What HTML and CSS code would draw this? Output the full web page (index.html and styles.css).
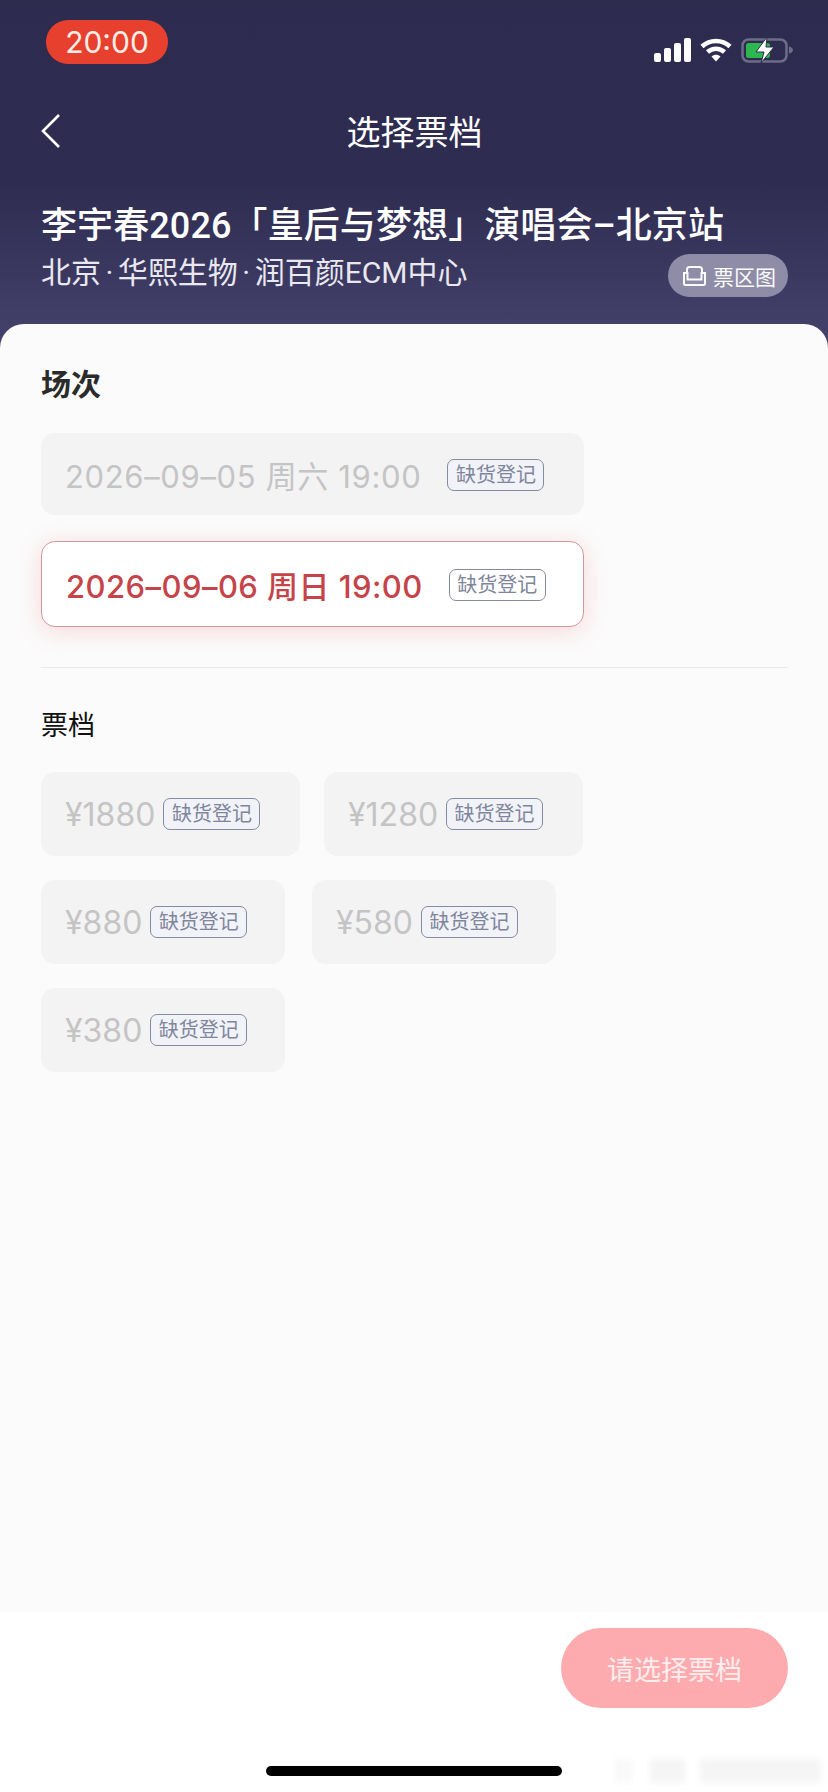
FILE: index.html
```html
<!DOCTYPE html>
<html>
  <head>
    <title>选择票档</title>
    <link rel="stylesheet" href="styles.css">
  </head>
  <body>
    <div class="page">
      <header class="top">
        <div class="status">
          <div class="time">20:00</div>
          <div class="status-icons">
            <svg class="signal" width="37" height="24" viewBox="0 0 37 24">
              <rect x="0" y="15" width="7" height="9" rx="2"/>
              <rect x="10" y="10" width="7" height="14" rx="2"/>
              <rect x="20" y="5" width="7" height="19" rx="2"/>
              <rect x="30" y="0" width="7" height="24" rx="2"/>
            </svg>
            <svg class="wifi" width="32" height="24" viewBox="0 0 32 24">
              <path d="M2 8.500C10 1 22 1 30 8.500" />
              <path d="M7.500 14C12.500 9.500 19.500 9.500 24.500 14" />
              <path class="wifi-dot" d="M11.500 18.500C14 16.300 18 16.300 20.500 18.500L16 23.500Z" />
            </svg>
            <svg class="battery" width="53" height="28" viewBox="0 0 53 28">
              <rect class="battery-case" x="1.500" y="3.500" width="44" height="22" rx="6"/>
              <rect class="battery-fill" x="5" y="7" width="24" height="15" rx="2.500"/>
              <path class="battery-nub" d="M48 10.500c2.500.5 4 2 4 3.500s-1.500 3-4 3.500z"/>
              <path class="battery-bolt" d="M26 1 15 16h8l-3 11 13-16h-8z"/>
            </svg>
          </div>
        </div>
        <nav class="nav">
          <svg class="back" width="21" height="36" viewBox="0 0 21 36">
            <path d="M18 2 2 18l16 16"/>
          </svg>
          <div class="nav-title">选择票档</div>
        </nav>
        <h1 class="show-name">李宇春2026「皇后与梦想」演唱会–北京站</h1>
        <div class="venue-row">
          <div class="venue">北京<span class="dot">·</span>华熙生物<span class="dot">·</span>润百颜ECM中心</div>
          <div class="map-btn">
            <svg width="23" height="20" viewBox="0 0 23 20">
              <path d="M4 8V3.500C4 2 5 1 6.500 1h10C18 1 19 2 19 3.500V8"/>
              <path d="M1 7h3.500v6.500h14V7H22v10.500c0 .8-.7 1.500-1.500 1.500h-18C1.700 19 1 18.300 1 17.500z"/>
            </svg>
            <span>票区图</span>
          </div>
        </div>
      </header>

      <main class="sheet">
        <h2 class="section-title">场次</h2>
        <div class="session-list">
          <div class="option session">
            <span class="label">2026–09–05 周六 19:00</span>
            <span class="tag">缺货登记</span>
          </div>
          <div class="option session selected">
            <span class="label">2026–09–06 周日 19:00</span>
            <span class="tag">缺货登记</span>
          </div>
        </div>
        <div class="divider"></div>
        <h2 class="section-title light">票档</h2>
        <div class="price-list">
          <div class="option price wide">
            <span class="label">¥1880</span>
            <span class="tag">缺货登记</span>
          </div>
          <div class="option price wide">
            <span class="label">¥1280</span>
            <span class="tag">缺货登记</span>
          </div>
          <div class="option price">
            <span class="label">¥880</span>
            <span class="tag">缺货登记</span>
          </div>
          <div class="option price">
            <span class="label">¥580</span>
            <span class="tag">缺货登记</span>
          </div>
          <div class="option price">
            <span class="label">¥380</span>
            <span class="tag">缺货登记</span>
          </div>
        </div>
      </main>

      <footer class="bottom">
        <button class="confirm">请选择票档</button>
        <div class="home-row">
          <div class="home-bar"></div>
          <div class="smudge"></div>
        </div>
      </footer>
    </div>
  </body>
</html>
```

FILE: styles.css
```css
* {
  box-sizing: border-box;
}
body {
  margin: 0;
  font-family: Inter, "Noto Sans CJK SC", sans-serif;
  background: #fff;
}
.page {
  width: 828px;
  height: 1792px;
  display: flex;
  flex-direction: column;
  overflow: hidden;
}

/* header */
.top {
  height: 348px;
  margin-bottom: -24px;
  padding: 20px 40px 0 41px;
  background: linear-gradient(#2d2b4e 0, #2e2c50 180px, #45426d 348px);
  color: #fff;
}
.status {
  display: flex;
  justify-content: space-between;
  margin-left: 5px;
}
.time {
  width: 122px;
  height: 44px;
  border-radius: 22px;
  background: #e8402f;
  color: #fdeee6;
  font-size: 30px;
  line-height: 44px;
  text-align: center;
}
.status-icons {
  display: flex;
  align-items: flex-start;
  gap: 9px;
  padding-top: 17px;
  margin-right: -6px;
}
.signal {
  margin-top: 1px;
  fill: #fff;
}
.wifi {
  margin-top: 1px;
  fill: none;
  stroke: #fff;
  stroke-width: 4.500;
}
.wifi-dot {
  fill: #fff;
  stroke: none;
}
.battery {
  margin-top: -1px;
}
.battery-case {
  fill: none;
  stroke: #6e6c88;
  stroke-width: 2.500;
}
.battery-fill {
  fill: #2db84f;
}
.battery-nub {
  fill: #6e6c88;
}
.battery-bolt {
  fill: #fff;
  stroke: #2d2b4e;
  stroke-width: 1;
}
.nav {
  display: flex;
  align-items: center;
  justify-content: center;
  height: 40px;
  margin-top: 49px;
  position: relative;
}
.back {
  position: absolute;
  left: 0;
  top: 0;
  fill: none;
  stroke: #fff;
  stroke-width: 2.600;
}
.nav-title {
  font-size: 34px;
  line-height: 40px;
}
.show-name {
  margin: 51px 0 0;
  font-family: Roboto, "Noto Sans CJK SC", sans-serif;
  font-size: 36px;
  line-height: 44px;
  font-weight: 500;
  letter-spacing: .1px;
  white-space: nowrap;
}
.venue-row {
  display: flex;
  justify-content: space-between;
  margin-top: 6px;
}
.venue {
  font-family: Roboto, "Noto Sans CJK SC", sans-serif;
  font-size: 30px;
  line-height: 38px;
  color: #e9e8f0;
}
.venue .dot {
  margin: 0 4.500px;
}
.map-btn {
  display: flex;
  align-items: center;
  gap: 7px;
  width: 120px;
  height: 43px;
  padding-left: 15px;
  border-radius: 22px;
  background: #8e8ca6;
  font-size: 21px;
  color: #fbfbfd;
}
.map-btn svg {
  fill: none;
  stroke: #fbfbfd;
  stroke-width: 2;
}

/* sheet */
.sheet {
  flex: 1;
  padding: 40px 41px 0 41px;
  border-radius: 24px 24px 0 0;
  background: #fbfbfb;
  position: relative;
}
.section-title {
  margin: 0;
  font-size: 30px;
  line-height: 40px;
  font-weight: 700;
  color: #2b2b2b;
}
.session-list {
  display: flex;
  flex-direction: column;
  gap: 26px;
  margin-top: 29px;
}
.option {
  display: flex;
  align-items: center;
  height: 84px;
  padding-left: 24px;
  border-radius: 14px;
  background: #f3f3f4;
  color: #c4c4c5;
}
.session {
  width: 543px;
  height: 82px;
  gap: 26px;
}
.session.selected {
  height: 86px;
  border: 1px solid #d3969b;
  background: #fff;
  color: #c5444a;
  box-shadow: 0 4px 24px rgba(240, 110, 110, .24);
}
.session .label {
  font-size: 31px;
  letter-spacing: .65px;
  white-space: nowrap;
}
.session.selected .label {
  font-weight: 500;
  letter-spacing: .45px;
}
.tag {
  flex: none;
  width: 97px;
  height: 32px;
  border: 1px solid #858ba0;
  border-radius: 7px;
  background: #f1f3f9;
  color: #7f869c;
  font-size: 20px;
  line-height: 30px;
  text-align: center;
}
.session .tag {
  margin-top: 1px;
}
.selected .tag {
  background: #fff;
}
.divider {
  height: 1px;
  margin-top: 40px;
  margin-right: -1px;
  background: #e9e9eb;
}
.section-title.light {
  margin-top: 40px;
  font-size: 27px;
  line-height: 36px;
  font-weight: 400;
  color: #111;
}
.price-list {
  display: flex;
  flex-wrap: wrap;
  gap: 24px 27px;
  width: 560px;
  margin-top: 28px;
}
.price {
  width: 244px;
  gap: 8px;
}
.price.wide {
  width: 259px;
}
.price.wide + .price.wide {
  margin-left: -3px;
}
.price .label {
  font-size: 32px;
}

/* bottom bar */
.bottom {
  height: 180px;
  padding-top: 16px;
  background: #fff;
}
.confirm {
  display: block;
  width: 227px;
  height: 80px;
  margin-left: 561px;
  border: 0;
  border-radius: 40px;
  background: #feabb0;
  color: #fdeeee;
  font-family: inherit;
  font-size: 27px;
}
.home-row {
  display: flex;
  align-items: center;
  gap: 55px;
  height: 24px;
  margin-top: 51px;
  padding-left: 266px;
}
.home-bar {
  width: 296px;
  height: 10px;
  border-radius: 5px;
  background: #000;
}
/* faint blurred mark beside the home bar */
.smudge {
  width: 204px;
  height: 24px;
  background: linear-gradient(90deg, #f2f2f2 0 4px, #fff 4px 9px, #f2f2f2 9px 13px, #fff 13px 33px, #f5f5f5 33px 68px, #fff 68px 83px, #f5f5f5 83px 204px);
  filter: blur(3px);
}
```
